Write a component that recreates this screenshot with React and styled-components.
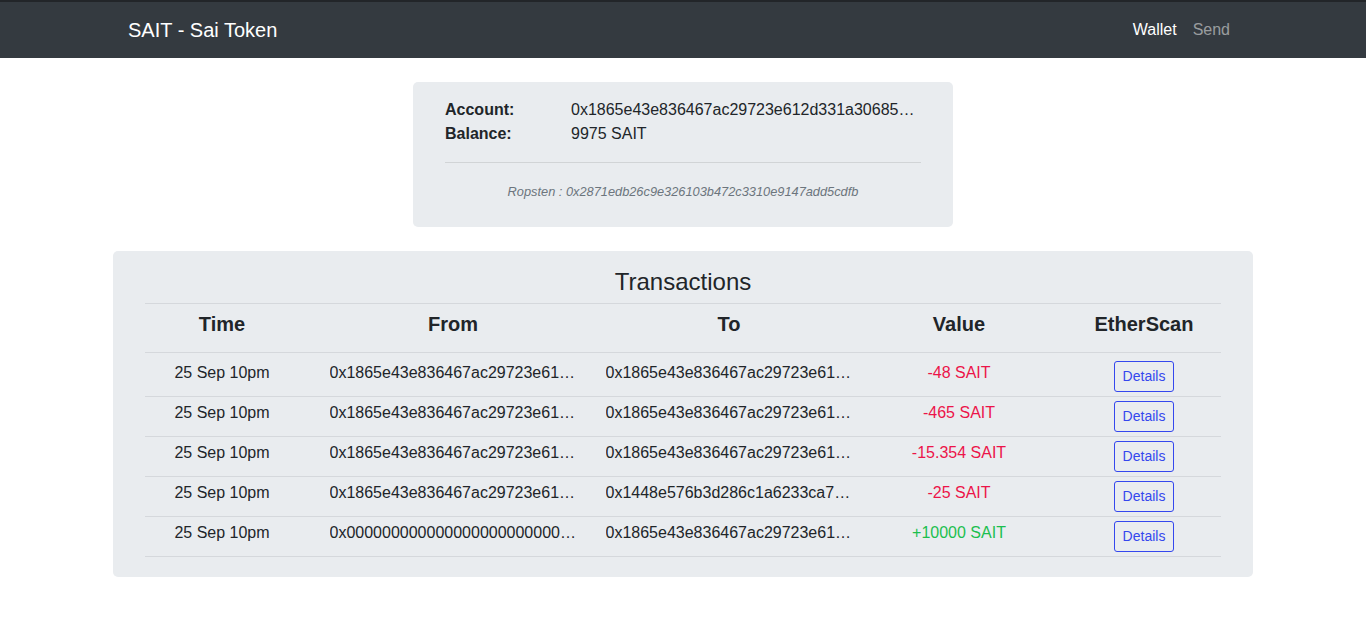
import React from "react";
import styled, { createGlobalStyle } from "styled-components";

const Global = createGlobalStyle`
  html, body { margin: 0; padding: 0; background: #fff; }
  body {
    font-family: "Liberation Sans", Arial, sans-serif;
    font-size: 16px;
    line-height: 24px;
    color: #212529;
  }
  * { box-sizing: border-box; }
`;

const NavBar = styled.nav`
  background: #343a40;
  border-top: 2px solid #222529;
  height: 58px;
  display: flex;
  justify-content: center;
`;

const NavInner = styled.div`
  width: 1140px;
  padding: 0 15px;
  display: flex;
  align-items: center;
  justify-content: space-between;
`;

const Brand = styled.a`
  color: #fff;
  font-size: 20px;
  line-height: 30px;
  text-decoration: none;
`;

const NavLinks = styled.div`
  display: flex;
`;

const NavLink = styled.a`
  padding: 8px;
  color: ${(p) => (p.$active ? "#fff" : "rgba(255,255,255,0.5)")};
  text-decoration: none;
  line-height: 24px;
`;

const Main = styled.main`
  display: flex;
  flex-direction: column;
  align-items: center;
  padding-top: 24px;
`;

const AccountCard = styled.section`
  width: 540px;
  background: #e9ecef;
  border-radius: 5px;
  padding: 16px 32px 23px;
`;

const InfoRow = styled.div`
  display: grid;
  grid-template-columns: 126px 350px;
  line-height: 24px;
`;

const Label = styled.span`
  font-weight: bold;
`;

const Value = styled.span`
  white-space: nowrap;
  overflow: hidden;
  text-overflow: ellipsis;
`;

const Rule = styled.hr`
  margin: 16px 0 17px;
  border: 0;
  border-top: 1px solid rgba(0, 0, 0, 0.1);
  height: 0;
`;

const Network = styled.p`
  margin: 0;
  text-align: center;
  line-height: 24px;
  font-size: 12.8px;
  font-style: italic;
  color: #6c757d;
`;

const TxCard = styled.section`
  width: 1140px;
  margin-top: 24px;
  background: #e9ecef;
  border-radius: 5px;
  padding: 17px 32px 20px;
`;

const Title = styled.h4`
  margin: 0 0 6px;
  font-size: 24px;
  font-weight: normal;
  line-height: 28.8px;
  text-align: center;
`;

const cols = "154px 308px 244px 216px 154px";

const HeadRow = styled.div`
  display: grid;
  grid-template-columns: ${cols};
  border-top: 1px solid #d5d8dc;
  border-bottom: 1px solid #d5d8dc;
  padding: 8px 0 16px;
`;

const HeadCell = styled.div`
  text-align: center;
  font-weight: bold;
  font-size: 20px;
  line-height: 24px;
`;

const Body = styled.div`
  padding-top: 4px;
`;

const Row = styled.div`
  display: grid;
  grid-template-columns: ${cols};
  border-bottom: 1px solid #d5d8dc;
  padding: 4px 0;
  height: 40px;
  align-items: start;
`;

const Cell = styled.div`
  display: flex;
  justify-content: center;
  line-height: 24px;
  color: ${(p) => p.$color || "inherit"};
  min-width: 0;
`;

const Trunc = styled.span`
  flex: none;
  width: 247px;
  white-space: nowrap;
  overflow: hidden;
  text-overflow: ellipsis;
`;

const DetailsButton = styled.a`
  display: inline-block;
  height: 31px;
  padding: 4px 8px;
  font-size: 14px;
  line-height: 21px;
  color: #3447ee;
  border: 1px solid #3447ee;
  border-radius: 3px;
  text-decoration: none;
  cursor: pointer;
`;

const ME = "0x1865e43e836467ac29723e612d331a306854b7c1";
const txs = [
  { from: ME, to: ME, value: "-48 SAIT", pos: false },
  { from: ME, to: ME, value: "-465 SAIT", pos: false },
  { from: ME, to: ME, value: "-15.354 SAIT", pos: false },
  { from: ME, to: "0x1448e576b3d286c1a6233ca79f02d7e4c5a1b388", value: "-25 SAIT", pos: false },
  { from: "0x0000000000000000000000000000000000000000", to: ME, value: "+10000 SAIT", pos: true },
];

export default function App() {
  return (
    <>
      <Global />
      <NavBar>
        <NavInner>
          <Brand href="#">SAIT - Sai Token</Brand>
          <NavLinks>
            <NavLink $active href="#">Wallet</NavLink>
            <NavLink href="#">Send</NavLink>
          </NavLinks>
        </NavInner>
      </NavBar>
      <Main>
        <AccountCard>
          <InfoRow>
            <Label>Account:</Label>
            <Value>{ME}</Value>
          </InfoRow>
          <InfoRow>
            <Label>Balance:</Label>
            <Value>9975 SAIT</Value>
          </InfoRow>
          <Rule />
          <Network>Ropsten : 0x2871edb26c9e326103b472c3310e9147add5cdfb</Network>
        </AccountCard>
        <TxCard>
          <Title>Transactions</Title>
          <HeadRow>
            <HeadCell>Time</HeadCell>
            <HeadCell>From</HeadCell>
            <HeadCell>To</HeadCell>
            <HeadCell>Value</HeadCell>
            <HeadCell>EtherScan</HeadCell>
          </HeadRow>
          <Body>
            {txs.map((t, i) => (
              <Row key={i}>
                <Cell>25 Sep 10pm</Cell>
                <Cell><Trunc>{t.from}</Trunc></Cell>
                <Cell><Trunc>{t.to}</Trunc></Cell>
                <Cell $color={t.pos ? "#1bbf4e" : "#ec1449"}>{t.value}</Cell>
                <Cell><DetailsButton>Details</DetailsButton></Cell>
              </Row>
            ))}
          </Body>
        </TxCard>
      </Main>
    </>
  );
}
